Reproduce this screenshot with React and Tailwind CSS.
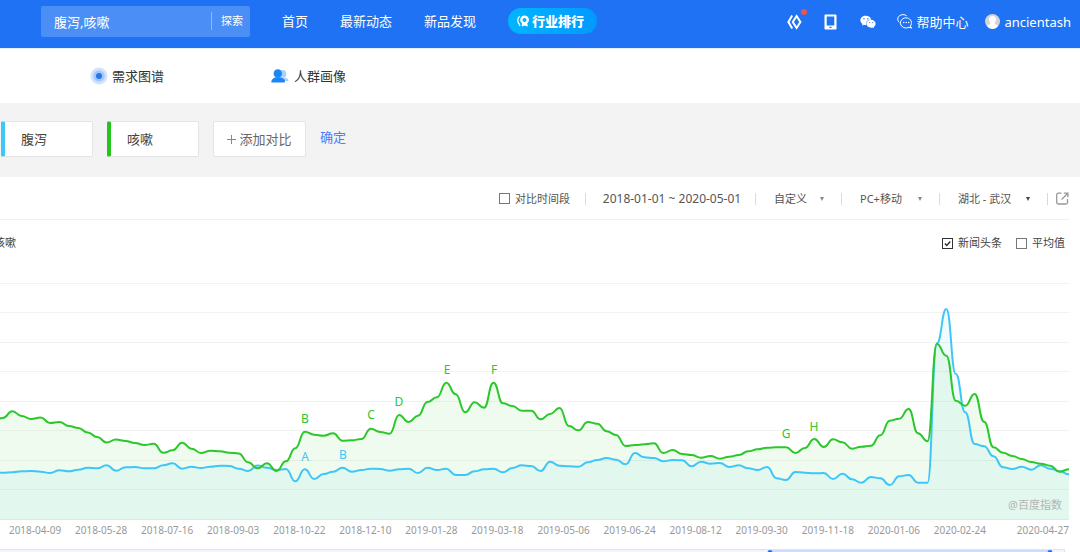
import React from "react";
import { FaWeixin } from "react-icons/fa";
import * as Slider from "@radix-ui/react-slider";

const COUGH = [
  420, 418, 411.3, 416, 419, 417.5, 423, 422, 426, 428, 432.5, 437, 442.5, 439.5, 441, 443, 445, 443.8, 452.8, 450.3,
  442.7, 448.7, 453, 450.7, 451.3, 452.7, 453.5, 462.3, 468.3, 463.2, 471, 461.3, 448.3, 431.7, 434.7, 435.7, 433.3,
  440.7, 440.3, 439, 428.7, 432, 433.7, 415, 422, 415.7, 402, 397.3, 382.7, 394.3, 412.3, 402.3, 407.7, 382.7, 403.3,
  406, 410.7, 410.7, 419.3, 414, 408, 426, 430.3, 422, 423.7, 431.3, 435, 446, 445, 444.3, 443.3, 453, 450, 454, 455,
  457.7, 456, 458.7, 456.7, 455, 451.3, 449.3, 447.7, 447.3, 447.3, 453, 448, 439, 447, 439.3, 442.3, 448.7, 446.7,
  445.7, 435.3, 420.7, 418.7, 409, 433.3, 441.3, 344, 355.7, 400.7, 405.7, 394, 421.7, 447.3, 452.7, 456, 459, 462,
  463.7, 465.7, 471.7, 469.3,
];

const DIARRHEA = [
  472.5, 472.7, 472.3, 471.3, 471, 471.7, 473, 470.3, 471.3, 469.7, 467.7, 468.3, 465.3, 470.7, 467.3, 467, 468.3,
  468.3, 465.3, 463.3, 468.7, 466.7, 468, 466.7, 465.7, 466, 468.7, 471, 465.5, 467.7, 470, 469, 481.3, 469.3, 479,
  474, 471.7, 467.7, 471.7, 470, 468.7, 469, 470.7, 469.3, 468.7, 473, 467.7, 470, 468.7, 475, 475, 471.3, 469.3,
  468.7, 472.3, 468, 465.3, 466, 471, 461.7, 465.7, 466.3, 466.7, 462.3, 460, 458, 459.7, 464.3, 453, 457.3, 458,
  461.3, 460, 460.3, 466.3, 461.7, 463.7, 463, 467, 465.3, 468.3, 470, 467, 478.3, 480, 472, 472.7, 473.3, 473, 479,
  473.7, 479.3, 482.7, 477, 478.3, 485, 476.3, 475, 482.7, 482.7, 343.3, 309, 374, 412.3, 444, 446.3, 456.3, 467.3,
  469, 466.7, 469.7, 465.3, 468.7, 471.3, 474.3,
];

const WIDTH = 1069;
const TOP = 260;
const BASE = 260;
const STEP = 9.435;

function linePath(values) {
  const pts = values.map((v, i) => [WIDTH - (values.length - 1 - i) * STEP, v - TOP]);
  let d = `M${pts[0][0].toFixed(1)} ${pts[0][1].toFixed(1)}`;
  for (let i = 1; i < pts.length; i++) {
    const [x0, y0] = pts[i - 1];
    const [x1, y1] = pts[i];
    const mid = ((x0 + x1) / 2).toFixed(1);
    d += `C${mid} ${y0.toFixed(1)} ${mid} ${y1.toFixed(1)} ${x1.toFixed(1)} ${y1.toFixed(1)}`;
  }
  return d;
}

const GRID = [23.5, 52.5, 82.5, 111.5, 141.5, 170.5, 200.5, 229.5, 259.5];

const MARKS = [
  ["B", 305, 163, "cough"],
  ["C", 371, 159, "cough"],
  ["D", 399, 146, "cough"],
  ["E", 447, 114, "cough"],
  ["F", 494, 114, "cough"],
  ["G", 786, 178, "cough"],
  ["H", 814, 171, "cough"],
  ["A", 305, 201, "diarrhea"],
  ["B", 343, 199, "diarrhea"],
];

const DATES = [
  "2018-04-09", "2018-05-28", "2018-07-16", "2018-09-03", "2018-10-22", "2018-12-10", "2019-01-28", "2019-03-18",
  "2019-05-06", "2019-06-24", "2019-08-12", "2019-09-30", "2019-11-18", "2020-01-06", "2020-02-24",
];

function TrendChart() {
  const cough = linePath(COUGH);
  const diarrhea = linePath(DIARRHEA);
  const close = `V${BASE}H-10Z`;
  return (
    <svg viewBox="0 0 1069 260" className="block w-full" role="img" aria-label="搜索指数趋势">
      {GRID.map((y) => (
        <line key={y} x1="0" x2="1069" y1={y} y2={y} stroke="#f2f2f2" strokeWidth="1" />
      ))}
      <path d={diarrhea + close} fill="#38c4f6" fillOpacity="0.07" />
      <path d={cough + close} fill="#28c828" fillOpacity="0.075" />
      <path d={diarrhea} fill="none" stroke="#3ec6f8" strokeWidth="2" strokeLinejoin="round" />
      <path d={cough} fill="none" stroke="#2ac82a" strokeWidth="2" strokeLinejoin="round" />
      {MARKS.map(([t, x, y, s]) => (
        <text key={t + s} x={x} y={y} textAnchor="middle" fontSize="12" fill={s === "cough" ? "#2ac82a" : "#3ec6f8"}>
          {t}
        </text>
      ))}
      <text x="1062" y="249" textAnchor="end" fontSize="11" fill="#b5b5b5">
        @百度指数
      </text>
    </svg>
  );
}

function CodeIcon() {
  return (
    <svg width="15" height="16" viewBox="0 0 15 16" fill="none" stroke="#fff" strokeWidth="2">
      <path d="M5.2 1.6 1.4 8l3.8 6.4" />
      <path d="M9.6 2 13.4 8l-3.8 6L5.8 8z" />
    </svg>
  );
}

function TabletIcon() {
  return (
    <svg width="13" height="16" viewBox="0 0 13 16">
      <path
        fillRule="evenodd"
        fill="#fff"
        d="M1.6.5h9.8c.7 0 1.1.5 1.1 1.1v12.8c0 .7-.4 1.1-1.1 1.1H1.6c-.7 0-1.1-.4-1.1-1.1V1.6C.5 1 .9.5 1.6.5zM2.7 2.5v9h7.6v-9zM5.4 12.8v1.3h2.2v-1.3z"
      />
    </svg>
  );
}

function HelpIcon() {
  return (
    <svg width="16" height="15" viewBox="0 0 16 15" fill="none" stroke="#fff" strokeWidth="1" strokeLinecap="round">
      <path d="M13.600 11.800A5.600 5.100 0 1 0 12 13.200l2.300.8z" strokeLinejoin="round" />
      <path d="M2 8.200C.2 6.500.2 3.300 2.500 1.700 4.500.3 7.500.2 9.300 1.500" />
      <path d="M6.700 8.500h.1M9.200 8.500h.1M11.700 8.500h.1" strokeWidth="1.400" />
    </svg>
  );
}

function AvatarIcon() {
  return (
    <svg width="15" height="15" viewBox="0 0 15 15">
      <circle cx="7.5" cy="7.500" r="7.500" fill="#d4d4d4" />
      <path
        fill="#fff"
        d="M7.500 2C9.700 2 11 3.500 11 5.500c0 1.500-.5 2.600-1.300 3.400v1c1 .5 2.600.9 3.200 2.100A7.400 7.400 0 0 1 7.500 15a7.400 7.400 0 0 1-5.400-3c.6-1.200 2.200-1.600 3.200-2.100v-1C4.500 8.100 4 7 4 5.500 4 3.500 5.300 2 7.500 2z"
      />
    </svg>
  );
}

function RankIcon() {
  return (
    <svg width="12" height="12" viewBox="0 0 12 12">
      <path
        fill="#fff"
        fillRule="evenodd"
        d="M7.500.4a4.400 4.400 0 0 1 2.700 7.900l.7 3.300-3.300-1.200-2.900 1.200.3-3.300A4.400 4.400 0 0 1 7.500.4zm0 2.500a2 2 0 1 0 0 4 2 2 0 0 0 0-4z"
      />
      <path d="M2.700 1.300C.2 3.500.2 7 2.500 9.500l.3 1.500" fill="none" stroke="#fff" strokeWidth="1.300" />
    </svg>
  );
}

function TargetIcon() {
  return (
    <svg width="18" height="18" viewBox="0 0 18 18">
      <circle cx="9" cy="9" r="8.500" fill="#d3e3fc" />
      <circle cx="9" cy="9" r="5.800" fill="#a5c8fa" />
      <circle cx="9" cy="9" r="3" fill="#1f78f2" />
    </svg>
  );
}

function PeopleIcon() {
  return (
    <svg width="18" height="14" viewBox="0 0 18 14">
      <g fill="#a9d0fb">
        <circle cx="11.300" cy="5" r="4" />
        <path d="M9 12c0-3 1-3.600 3-3.600 3 0 5.500 1 5.500 3.600z" />
      </g>
      <g fill="#1a86f8">
        <ellipse cx="6.800" cy="4.500" rx="4.200" ry="4.300" />
        <path d="M.3 13.500c0-3.200 2.200-5.200 6.500-5.200 4.500 0 7 2 7.200 4 0 .8-.4 1.200-1.200 1.200z" />
      </g>
    </svg>
  );
}

function ShareIcon() {
  return (
    <svg width="13" height="13" viewBox="0 0 13 13" fill="none" stroke="#999" strokeWidth="1.300">
      <path d="M5.500 1.200H2.200c-.9 0-1.500.6-1.500 1.500v7.800c0 .9.6 1.500 1.500 1.500h7.800c.9 0 1.500-.6 1.500-1.500V7" />
      <path d="M7.800 1.200h4.100v4.100M11.800 1.300 5.600 7.500" />
    </svg>
  );
}

function Tick({ id, label, defaultChecked }) {
  return (
    <label htmlFor={id} className="flex items-center gap-[5px]">
      <span className="grid size-[11px] place-items-center">
        <input
          id={id}
          type="checkbox"
          defaultChecked={defaultChecked}
          className="peer col-start-1 row-start-1 size-[11px] appearance-none border border-[#777] bg-white checked:border-[#333]"
        />
        <svg
          viewBox="0 0 11 11"
          className="pointer-events-none invisible col-start-1 row-start-1 size-[11px] peer-checked:visible"
          fill="none"
          stroke="#333"
          strokeWidth="1.500"
        >
          <path d="M2.900 5.400 4.800 7.400 8.300 3.500" />
        </svg>
      </span>
      {label}
    </label>
  );
}

function Picker({ label, value, className, dark }) {
  return (
    <div className={"flex items-center " + className}>
      <select
        aria-label={label}
        defaultValue={value}
        className="min-w-0 flex-1 appearance-none bg-transparent leading-4"
      >
        <option>{value}</option>
      </select>
      <svg width="4" height="4" viewBox="0 0 4 4" className="pointer-events-none shrink-0">
        <path d="M0 0h4L2 4z" fill={dark ? "#444" : "#888"} />
      </svg>
    </div>
  );
}

const Rule = ({ className = "bg-[#dcdcdc]" }) => <span className={"h-3 w-px shrink-0 " + className} />;

function Header() {
  return (
    <header className="flex h-12 items-center bg-[#1f72f3] pr-[9px] pb-[6px] pl-[41px] text-[13px] text-white">
      <form className="flex h-[31px] w-[209px] shrink-0 items-center rounded-[2px] bg-[#4b8ff6]">
        <input
          aria-label="搜索关键词"
          defaultValue="腹泻,咳嗽"
          className="h-full min-w-0 flex-1 bg-transparent pl-[13px] outline-none"
        />
        <span className="h-[18px] w-px bg-[#8db9fa]" />
        <button type="button" className="w-[38px] pl-[2px] text-[11px]">
          探索
        </button>
      </form>
      <nav className="ml-8 flex shrink-0 items-center gap-8">
        <a href="#home">首页</a>
        <a href="#news">最新动态</a>
        <a href="#discover">新品发现</a>
        <a
          href="#rank"
          className="flex h-[26px] w-[89px] items-center justify-center gap-[3px] rounded-full bg-linear-to-r from-[#00b6ff] to-[#0099ff] pr-1 font-black"
        >
          <RankIcon />
          行业排行
        </a>
      </nav>
      <div className="ml-auto flex shrink-0 items-center pt-px">
        <a href="#code" aria-label="开放平台" className="relative mr-[22px]">
          <CodeIcon />
          <span className="absolute -top-[5px] -right-[5px] size-[6px] rounded-full bg-[#f05050]" />
        </a>
        <a href="#mobile" aria-label="移动版" className="mr-[23px]">
          <TabletIcon />
        </a>
        <a href="#wechat" aria-label="微信" className="mr-[21px]">
          <FaWeixin size={16} />
        </a>
        <a href="#help" className="mr-[17px] flex items-center gap-[3px]">
          <HelpIcon />
          帮助中心
        </a>
        <a href="#user" className="flex items-center gap-1">
          <AvatarIcon />
          ancientash
        </a>
      </div>
    </header>
  );
}

export default function App() {
  return (
    <div className="overflow-hidden bg-white font-['Noto_Sans','Noto_Sans_CJK_SC',sans-serif] leading-5 text-[#444]">
      <Header />
      <nav className="flex h-[55px] items-center gap-[107px] border-t border-[#e4eefd] pl-[90px] text-[13px] text-[#333]">
        <a href="#demand" className="flex items-center gap-1">
          <TargetIcon />
          需求图谱
        </a>
        <a href="#crowd" className="flex items-center gap-[5px]">
          <PeopleIcon />
          人群画像
        </a>
      </nav>
      <section className="flex h-[74px] items-center bg-[#f3f3f3] pb-[2px] pl-px text-[13px]">
        <input
          aria-label="关键词一"
          defaultValue="腹泻"
          className="h-9 w-[92px] rounded-[2px] border border-l-4 border-[#e4e4e4] border-l-[#3ec6f8] bg-white pb-[2px] pl-4 outline-none"
        />
        <input
          aria-label="关键词二"
          defaultValue="咳嗽"
          className="ml-[14px] h-9 w-[92px] rounded-[2px] border border-l-4 border-[#e4e4e4] border-l-[#22c41e] bg-white pb-[2px] pl-4 outline-none"
        />
        <button
          type="button"
          className="ml-[14px] flex h-9 w-[93px] items-center justify-center gap-[3px] rounded-[2px] border border-[#e4e4e4] bg-white text-[#666]"
        >
          <svg width="9" height="9" viewBox="0 0 9 9" stroke="#888" strokeWidth="1">
            <path d="M4.500 0v9M0 4.500h9" />
          </svg>
          添加对比
        </button>
        <button type="button" className="ml-[14px] pb-1 text-[#4a7dfb]">
          确定
        </button>
      </section>
      <main className="pr-[11px] text-[11px]">
        <div className="flex h-[43px] items-center justify-end border-b border-[#f0f0f0] pt-px text-[#555]">
          <div className="mr-[15px]">
            <Tick id="compare" label="对比时间段" />
          </div>
          <Rule />
          <button type="button" className="w-[169px] pl-[3px] text-center text-xs">
            2018-01-01 ~ 2020-05-01
          </button>
          <Rule />
          <Picker label="时间范围" value="自定义" className="w-[85px] pr-[17px] pl-[18px]" />
          <Rule />
          <Picker label="设备" value="PC+移动" className="w-[97px] pr-[17px] pl-[18px]" />
          <Rule />
          <Picker label="地区" value="湖北 - 武汉" className="w-[107px] pr-[17px] pl-[18px]" dark />
          <Rule className="bg-[#bfe6dc]" />
          <button type="button" aria-label="导出" className="ml-2">
            <ShareIcon />
          </button>
        </div>
        <div className="flex h-10 items-center justify-between pt-[6px] pr-1">
          <span className="-ml-[6px]">咳嗽</span>
          <div className="flex gap-[14px]">
            <Tick id="news-headlines" label="新闻头条" defaultChecked />
            <Tick id="average" label="平均值" />
          </div>
        </div>
        <TrendChart />
        <div className="flex h-[29px] pl-[2px] text-[10px] text-[#999]">
          {DATES.map((d) => (
            <span key={d} className="min-w-0 flex-1 text-center whitespace-nowrap">
              {d}
            </span>
          ))}
          <span className="w-[76px] text-right">2020-04-27</span>
        </div>
      </main>
      <div className="h-[3px] overflow-hidden pr-[15px]">
        <Slider.Root
          defaultValue={[772, 1053]}
          min={0}
          max={1065}
          className="relative flex h-[10px] w-full items-center border border-l-0 border-[#dfe3ea] bg-[#f2f6fc]"
        >
          <Slider.Track className="relative h-full w-full">
            <Slider.Range className="absolute h-full bg-[#ccdef9]" />
          </Slider.Track>
          <Slider.Thumb aria-label="开始日期" className="block h-2 w-[5px] rounded-full bg-[#1f72f3]" />
          <Slider.Thumb aria-label="结束日期" className="block h-2 w-[5px] rounded-full bg-[#1f72f3]" />
        </Slider.Root>
      </div>
    </div>
  );
}
